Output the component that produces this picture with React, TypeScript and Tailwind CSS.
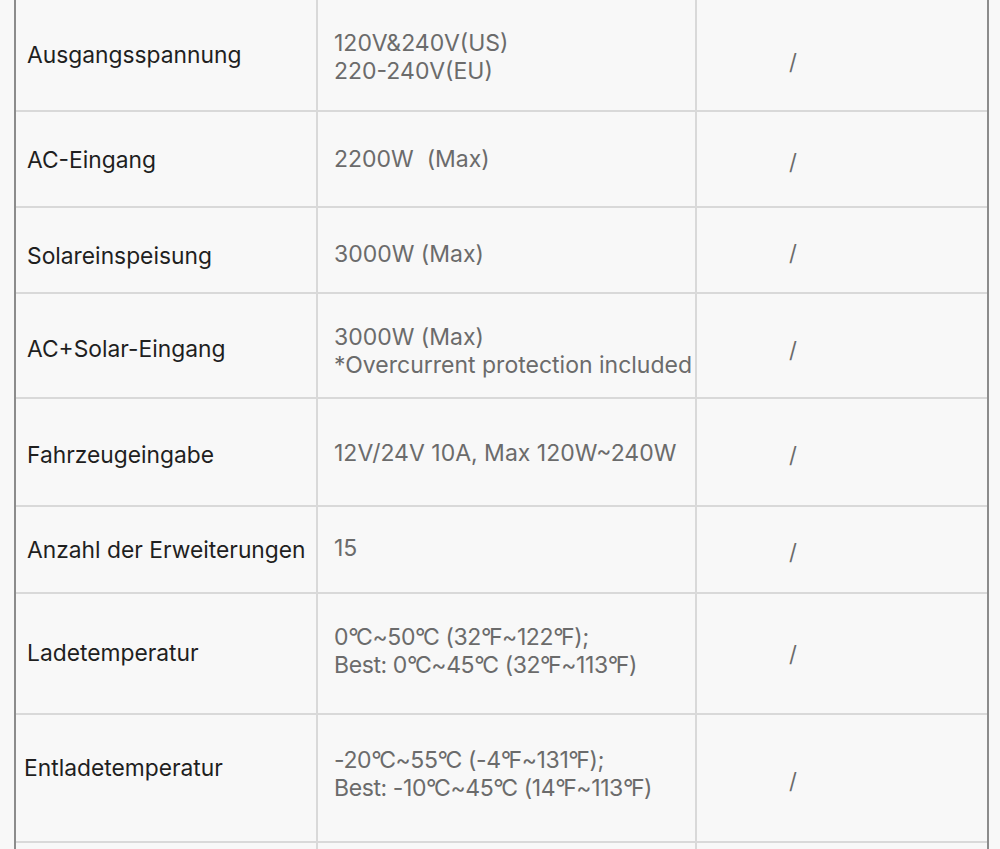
import React from 'react';

type Row = {
  label: string;
  value: string[];
  h: string;
  lab?: string;
  mid?: string;
  sl?: string;
};

const rows: Row[] = [
  { label: 'Ausgangsspannung', value: ['120V&240V(US)', '220-240V(EU)'], h: 'h-[112px]', lab: 'pl-[11px]', mid: 'pt-[4px]', sl: 'pt-[14px]' },
  { label: 'AC-Eingang', value: ['2200W  (Max)'], h: 'h-[96px]', lab: 'pl-[11px] pt-[2px]' },
  { label: 'Solareinspeisung', value: ['3000W (Max)'], h: 'h-[86px]', lab: 'pl-[11px] pt-[12px]', mid: 'pt-[8px]' },
  { label: 'AC+Solar-Eingang', value: ['3000W (Max)', '*Overcurrent protection included'], h: 'h-[105px]', lab: 'pl-[11px] pt-[8px]', mid: 'pt-[10px]', sl: 'pt-[10px]' },
  { label: 'Fahrzeugeingabe', value: ['12V/24V 10A, Max 120W~240W'], h: 'h-[108px]', mid: 'pt-[2px]' },
  { label: 'Anzahl der Erweiterungen', value: ['15'], h: 'h-[87px]', lab: 'pl-[11px] pt-[2px]', mid: 'pb-[4px]' },
  { label: 'Ladetemperatur', value: ['0℃~50℃ (32℉~122℉);', 'Best: 0℃~45℃ (32℉~113℉)'], h: 'h-[121px]', lab: 'pl-[11px]', mid: 'pb-[6px]', sl: 'pt-[2px]' },
  { label: 'Entladetemperatur', value: ['-20℃~55℃ (-4℉~131℉);', 'Best: -10℃~45℃ (14℉~113℉)'], h: 'h-[128px]', lab: 'pl-[8px] pb-[20px]', mid: 'pb-[8px]' },
  { label: '', value: [], h: 'h-[40px]' },
];

// ℃ / ℉ drawn as a tight ° + letter, like the compact glyph in the picture
function Temp({ text }: { text: string }) {
  const parts = text.split(/(℃|℉)/);
  return (
    <>
      {parts.map((p, i) =>
        p === '℃' || p === '℉' ? (
          <span key={i} className="tracking-[-2.5px]">
            °
            <span className="tracking-[-0.4px]">{p === '℃' ? 'C' : 'F'}</span>
          </span>
        ) : (
          <span key={i}>{p}</span>
        )
      )}
    </>
  );
}

export default function App() {
  return (
    <div className="h-[849px] w-[1000px] overflow-hidden bg-[#f8f8f8] font-['Inter',sans-serif]">
      <div className="ml-[14px] w-[975px] border-x-2 border-[#8c8c8c]">
        {rows.map((r, i) => (
          <div key={i} className={`flex border-b-2 border-[#d9d9d9] ${r.h}`}>
            <div
              className={`flex w-[302px] shrink-0 items-center border-r-2 border-[#d9d9d9] text-[22.8px] text-[#1f1f1f] ${
                r.lab ?? 'pl-[11px] pt-[6px]'
              }`}
            >
              {r.label}
            </div>
            <div
              className={`flex w-[379px] shrink-0 flex-col justify-center whitespace-pre border-r-2 border-[#d9d9d9] pl-[16px] text-[23px] leading-[28px] text-[#6b6b6b] ${
                r.mid ?? ''
              }`}
            >
              {r.value.map((v, j) => (
                <div key={j} className={/[℃℉]/.test(v) ? 'tracking-[-0.4px]' : ''}>
                  <Temp text={v} />
                </div>
              ))}
            </div>
            <div className={`flex flex-1 items-center pl-[92px] text-[22px] text-[#6b6b6b] ${r.sl ?? 'pt-[6px]'}`}>
              {r.label ? '/' : ''}
            </div>
          </div>
        ))}
      </div>
    </div>
  );
}
